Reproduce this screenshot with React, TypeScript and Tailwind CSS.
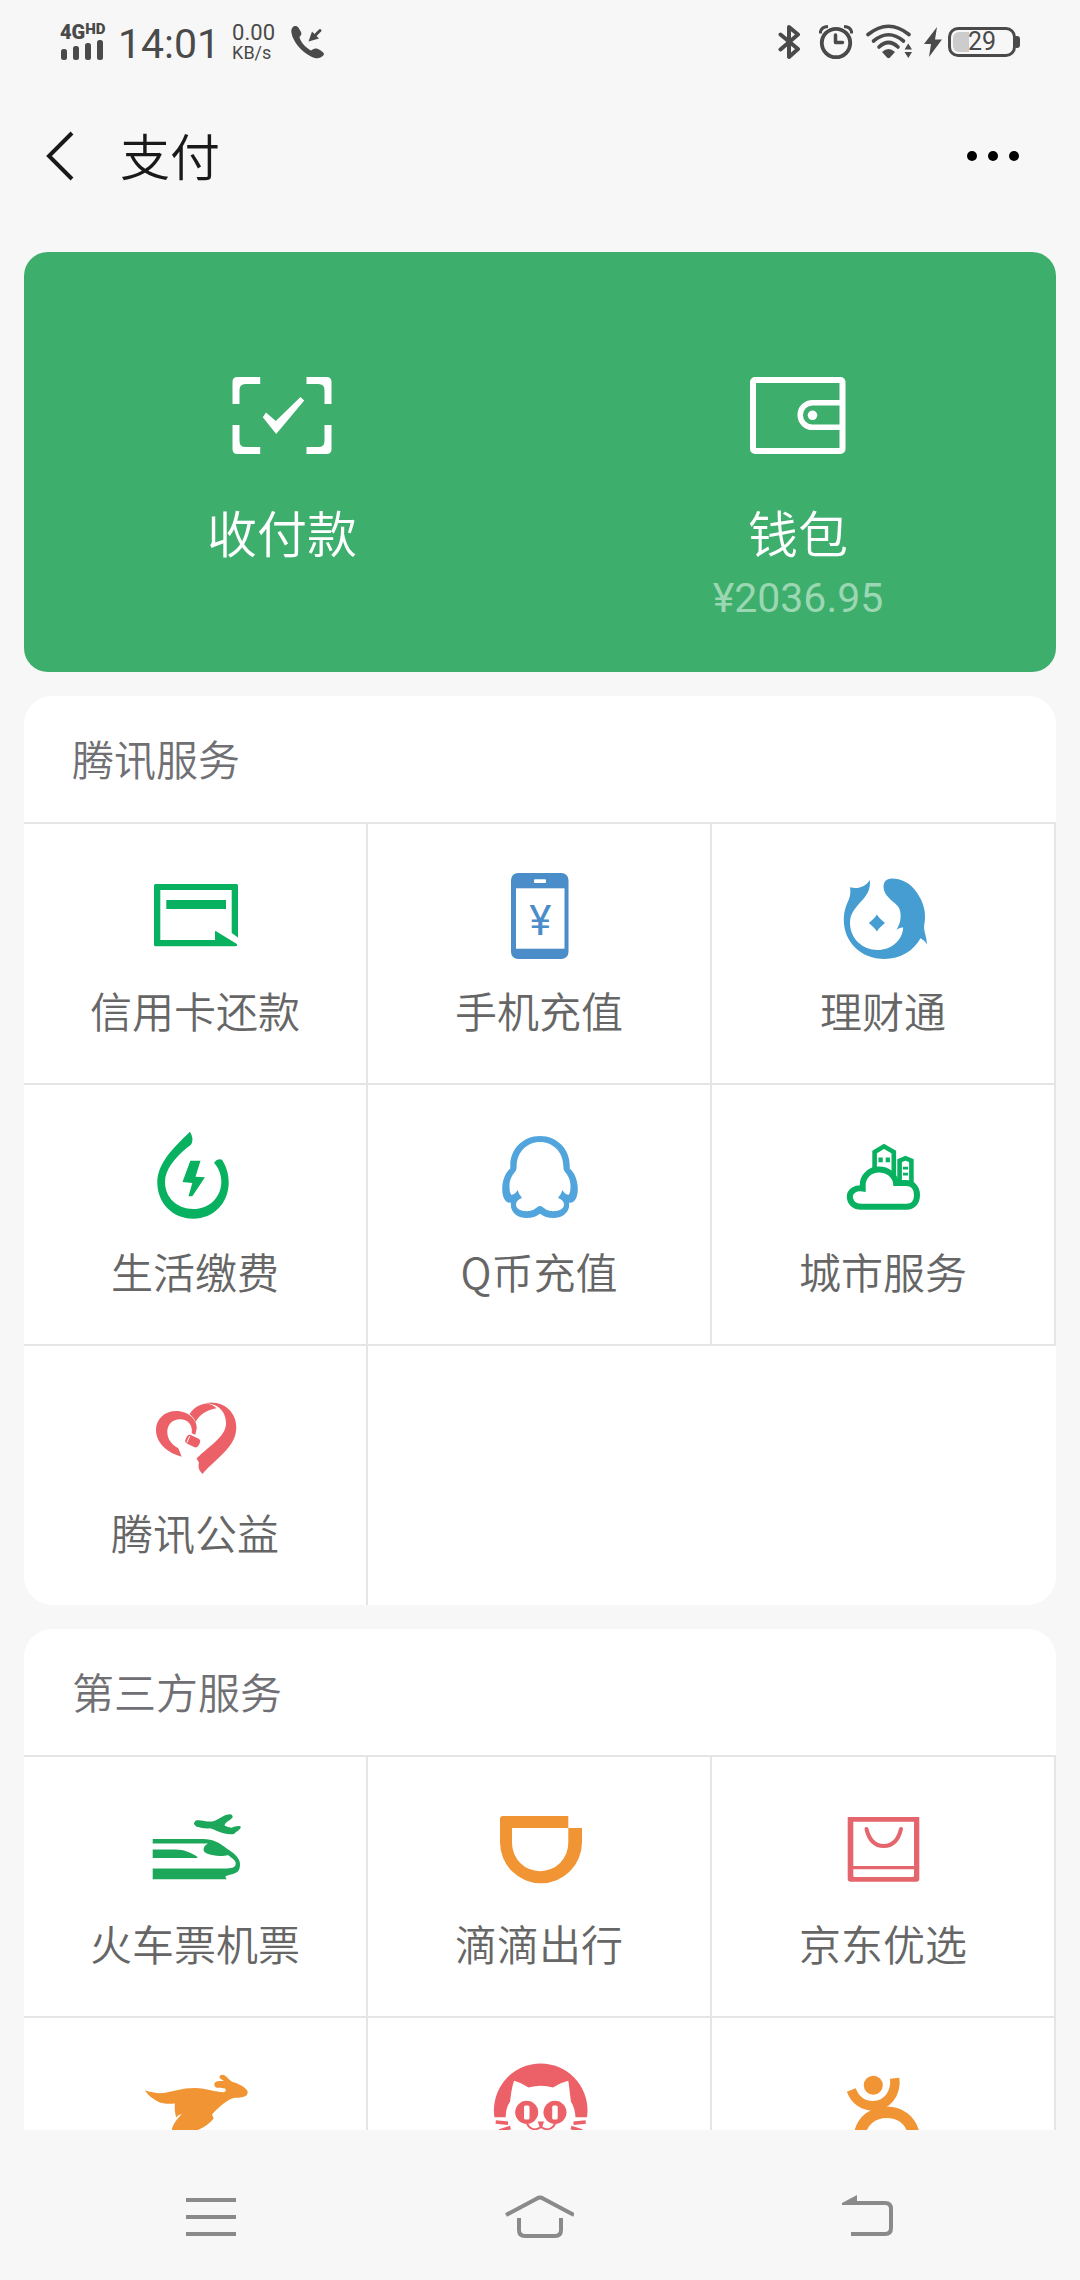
import type { ReactNode } from 'react';

interface Service {
  label?: string;
  icon: ReactNode;
}

const GREEN = '#07b15f';
const BLUE = '#469dd2';
const RED = '#ec6167';
const ORANGE = '#f19433';

function TileIcon({ children }: { children: ReactNode }) {
  return (
    <svg viewBox="0 0 96 96" className="h-24 w-24 overflow-visible" aria-hidden="true">
      {children}
    </svg>
  );
}

/* ---------- Tencent services ---------- */

const CreditCardIcon = (
  <TileIcon>
    <path
      fill={GREEN}
      d="M8.5 16H89.5Q91 16 91 17.5V69.5L84.7 65V22H13.3V72H68V64Q68 62.5 69.5 63.4L89.5 75.8Q91 78.3 88.5 78.3H8.5Q7 78.3 7 76.8V17.5Q7 16 8.5 16Z"
    />
    <rect x="19.3" y="32" width="59.7" height="9" fill={GREEN} />
  </TileIcon>
);

const PhoneTopUpIcon = (
  <TileIcon>
    <rect x="20" y="5" width="57.5" height="86" rx="7" fill="#4a8dc9" />
    <rect x="25" y="20.3" width="48.5" height="60.4" fill="#fff" />
    <rect x="43" y="11.3" width="12" height="3.7" rx="1" fill="#fff" />
    <text x="49.3" y="67" textAnchor="middle" fill="#4a8dc9" className="font-[Roboto] text-[42px] font-normal">¥</text>
  </TileIcon>
);

const WealthIcon = (
  <TileIcon>
    <path
      fill={BLUE}
      d="M15 19.3C23 21.5 31 18.5 34.7 12C36 19 33 26 27.5 32C19.5 40.5 15 46 15 55C15 70 27 82 42.8 82C55.5 82 67.5 73 68.2 59.5C65.5 59.3 63.5 60.3 61.5 62C63.5 58 65.3 55 65.5 50.3C66 45 65 41 62.9 38.2C58 33 49.5 28.5 48.6 20C48.2 14 51 10.5 57 10.5C66 10.5 74 14.5 79.5 21.5C86.5 30 90.5 40 90 50C89.8 55 88.7 58 89.2 61C89.7 66 91.9 70 91.9 76.5C90.5 74 88 71.5 85.5 70.3C78.5 83 65.5 91 49.5 91C26 91 8.8 74 8.8 52C8.8 42.5 11.5 37 14 31C15.5 27 15.7 23 15 19.3Z"
    />
    <path fill={BLUE} d="M41.9 46.5C44 50 46.800 52.300 50 55C46.800 57.700 44 60 41.900 63.500C39.800 60 37 57.700 33.800 55C37 52.300 39.800 50 41.900 46.500Z" />
  </TileIcon>
);

const UtilitiesIcon = (
  <TileIcon>
    <path
      fill={GREEN}
      d="M43 2.7Q46.5 9 45 13.5C44.5 16 42 17 40 18.7C27 29.5 18 41 18 53C18 68.5 30 80 46.3 80C62.5 80 74.3 68 74.3 52.7C74.3 45 71.5 39 67 33.7L69.7 31Q73.5 29.3 75.2 31C79.5 38 81.7 45 81.7 53.5C81.7 74 66.5 89.7 46.3 89.7C25.5 89.7 10.3 74 10.3 53.5C10.3 34 27 18 43 2.7Z"
    />
    <path fill={GREEN} d="M43.3 31.700H53.500L48.500 47.700L58 48.300L45.300 67.300H41.500L45.300 54L35.500 53Z" />
  </TileIcon>
);

const QCoinIcon = (
  <TileIcon>
    <path
      fill="#52a5dc"
      fillRule="evenodd"
      d="M49 7C66 7 78.7 20 78.7 36V39.5C84 44 86.8 52 86.8 60C86.8 68 84 73.7 79 73.7H78C79.5 83.5 71 89 62.3 89C57 89 52.5 87.5 49 84.7C45.5 87.5 41 89 35.7 89C27 89 18.5 83.5 20 73.7H19C14 73.7 11.2 68 11.2 60C11.2 52 14 44 19.3 39.5V36C19.3 20 32 7 49 7ZM49 13C36 13 26 23 25.7 36.5C25.7 39 25.3 41 24.3 42.5C20.5 47 18.5 51 18.5 57C18.5 61.5 19 64.5 20.5 66C23.5 65.5 25.3 63.5 26.5 61Q28 66 31 68.7C27 70.5 25 72.5 25 75.5C25 80 30 82.2 35.7 82.2C41.5 82.2 44 80 47 77.5Q49 76.3 51 77.5C54 80 56.5 82.2 62.3 82.2C68 82.2 73 80 73 75.5C73 72.5 71 70.5 67 68.7Q70 66 71.5 61C72.7 63.5 74.5 65.5 77.5 66C79 64.5 79.5 61.5 79.5 57C79.5 51 77.5 47 73.7 42.5C72.7 41 72.3 39 72.3 36.5C72 23 62 13 49 13Z"
    />
  </TileIcon>
);

const CityIcon = (
  <TileIcon>
    <g fill="none" stroke={GREEN}>
      <path strokeWidth="6" d="M27.7 59.5C20 58.5 14.8 62.5 14.8 67.8C14.8 73.5 19.5 77.7 26 77.7H71.5C77.5 77.7 82 73.5 82 66C82 58.5 77.5 54 71 54H61C60 46 52.5 40.5 44 40.5C34.5 40.5 27.7 47.5 27.7 56Z" />
      <path strokeWidth="4.6" d="M39.600 42V23L49 17.300L58.800 23V50M64.600 54V31.700L70.500 29.200L76.400 31.700V54" />
    </g>
    <path fill={GREEN} d="M43.500 28.500h4.200v4.700h-4.200zM50.700 28.500h4.200v4.700h-4.200zM68 37.700h5v2.700h-5zM68 43.700h5v2.700h-5z" />
  </TileIcon>
);

const CharityIcon = (
  <TileIcon>
    <path
      fill={RED}
      d="M34.7 66.7C19 62.5 9 52 9 40C9 29 17.5 21 29.5 21C41 21 50.5 30 49.7 38.5L48.3 44.7L44.7 43.3C46 35 41 29.5 33 29.3C25.5 29.3 20.3 34.5 20.3 42C20.3 49 24.5 54.5 31.3 58.3Z"
    />
    <path fill={RED} d="M42.5 24C49 15 56 13.3 62 14C65 15 68 16.5 69.5 18.3C60 20 53 24 48.5 32C47.5 29 45.5 26.5 42.5 24Z" />
    <path
      fill={RED}
      d="M58 13.2C76 9.5 89.3 22 89.3 37C89.3 50 82 58 72 67.5C65 74 59 79.5 55.5 84C52.5 81 51.3 78.5 51.5 75L52 72.5L49.5 68.5C56 62 61 58.5 67 53C74.5 46 79 41 79 33.3C79 25 75 18.5 68 15.3C65 14 61.5 13.2 58 13.2Z"
    />
    <rect x="38.5" y="46.3" width="14.5" height="9.5" rx="3.5" fill={RED} transform="rotate(25 45.5 51)" />
    <path fill="none" stroke="#fff" strokeWidth="1" d="M42.7 46.2L39.8 52.8" />
  </TileIcon>
);

/* ---------- Third-party services ---------- */

const TravelIcon = (
  <TileIcon>
    <path
      fill="#1da75a"
      fillRule="evenodd"
      d="M5.7 38H56C66 38 73 42 79.7 47.5C87 52 93 57 93 63C93 68.5 91.5 71.5 86 73Q79 74.5 78.3 75.7L79.7 78.3H5.7V67.5H78C84 67.5 88.5 67 88.7 62.8C89 59.5 85.5 57.5 81 54C79 54.7 76 55 73 55C64 54.5 56.5 52.5 56.5 48.5C56.5 45.5 59 43.5 61 42.5H5.7Z"
    />
    <path fill="#1da75a" d="M5.7 48.5H28C38 48.5 44 52 50.3 55.7V57H5.7Z" />
    <path
      fill="#1da75a"
      d="M49.7 19.3C55 18.5 60 21.5 66.3 20.3C72 18.5 76 14 81.5 13.5Q85.5 12.5 85.7 16.3C83 20 78.500 20.500 77.500 24.500Q81 26.500 84.700 26.700C87.500 25.500 91 24.500 93.700 25.500C94 29 89.500 30 87 33C83 33.500 80 33 76.300 32.300C71 31 67.500 28.500 63 27.300C58 28 54 26.500 49.700 25.700Q46 23.500 47.300 21.500Q48 19.700 49.700 19.300Z"
    />
  </TileIcon>
);

const DidiIcon = (
  <TileIcon>
    <path
      fill={ORANGE}
      fillRule="evenodd"
      d="M12 15H77.3V27H91V41.3A41 41 0 0 1 9 41.3V18Q9 15 12 15ZM21 27V42A28.15 28.15 0 0 0 77.3 42V27Z"
    />
  </TileIcon>
);

const ShoppingIcon = (
  <TileIcon>
    <path
      fill="#e4666c"
      fillRule="evenodd"
      d="M12.7 16H84.3V77.7Q84.3 80.7 81.3 80.7H15.7Q12.7 80.7 12.7 77.7ZM18.3 20.7V65H79V20.7ZM18.3 68.3V74.5Q18.3 76 19.8 76H77.5Q79 76 79 74.5V68.3Z"
    />
    <path fill="none" stroke="#e4666c" strokeWidth="4" strokeLinecap="round" d="M31.5 28C34 38.5 40 45 48.7 45C57.5 45 63.5 38.5 66 28" />
  </TileIcon>
);

const KangarooIcon = (
  <TileIcon>
    <path
      fill={ORANGE}
      d="M-2 28.3C4 30.5 10 31.5 17 31C27 29.5 34 26 48 26C60 26.3 68 30 77 30.3Q80 29 78 26.5C74 25.5 70 27 68 24.5Q66 21.5 69 19.7C71.5 18.5 74.5 19.3 77 19C74.5 17.5 72 16.5 72.5 14.5Q73.5 12.3 76 12.7C80 14 82 18 85.5 20C91 21.5 97 24 100.3 28.5Q101.5 32.5 98.5 34C94 36.5 88 35 83.5 37C77.5 40.5 70 46.5 65 52.5L66.7 56.5C63 61 58 65 52 67.5C46 70 38 68 24.7 72C24 64 29 58.5 34.7 52C32.5 52.5 30.5 53.5 29.2 55.5C28 51 27.3 46 28 41.5C22 42 16 42 11.3 39.7C5 36.5 0 32.5 -2 28.3Z"
    />
  </TileIcon>
);

const CatIcon = (
  <TileIcon>
    <circle cx="49.7" cy="48.3" r="46.8" fill={RED} />
    <path
      fill="#fff"
      d="M23 18.7C28 20 33 22.5 37.5 25.5Q50 22 62 25.5C66.5 22.5 72 20 77.3 18.7C78.5 26 79 33 80 39.7Q84 46 84.5 55.3H100V100H0V55.3H14.7Q14.5 46 19 39.7C20 33 20.5 26 23 18.7Z"
    />
    <g fill="none" stroke={RED}>
      <path strokeWidth="3.5" d="M4.7 60L17 61.2M8.5 69L19.5 65.5M94.7 60L82.5 61.2M91 69L80 65.500" />
      <path strokeWidth="1.8" d="M35.7 61C38 66 43 70 50 65C57 70 62 66 64.5 61" />
    </g>
    <circle cx="35.7" cy="50.3" r="11.5" fill={RED} />
    <circle cx="64" cy="50.3" r="11.5" fill={RED} />
    <rect x="33" y="43.5" width="5.5" height="14" rx="1.5" fill="#fff" />
    <rect x="61.2" y="43.5" width="5.5" height="14" rx="1.5" fill="#fff" />
    <path fill={RED} d="M46.7 59.5H53L51 65.5H49Z" />
  </TileIcon>
);

const ReviewIcon = (
  <TileIcon>
    <circle cx="38.3" cy="23.3" r="9.5" fill={ORANGE} />
    <g fill="none" stroke={ORANGE}>
      <path strokeWidth="9.5" d="M16.3 28C20 38 28 43.8 38 43.8C52 43.8 61.5 31.5 59.7 16.3" />
      <path strokeWidth="11.5" d="M24.5 72C27.5 58.5 38 50.3 51.7 50.3C65.5 50.3 75.5 58.5 79 72" />
    </g>
  </TileIcon>
);

const tencentServices: Service[][] = [
  [
    { label: '信用卡还款', icon: CreditCardIcon },
    { label: '手机充值', icon: PhoneTopUpIcon },
    { label: '理财通', icon: WealthIcon },
  ],
  [
    { label: '生活缴费', icon: UtilitiesIcon },
    { label: 'Q币充值', icon: QCoinIcon },
    { label: '城市服务', icon: CityIcon },
  ],
  [{ label: '腾讯公益', icon: CharityIcon }],
];

const thirdPartyServices: Service[][] = [
  [
    { label: '火车票机票', icon: TravelIcon },
    { label: '滴滴出行', icon: DidiIcon },
    { label: '京东优选', icon: ShoppingIcon },
  ],
  [{ icon: KangarooIcon }, { icon: CatIcon }, { icon: ReviewIcon }],
];

function ServiceCard({ title, rows }: { title: string; rows: Service[][] }) {
  return (
    <section className="shrink-0 overflow-hidden rounded-[28px] bg-white">
      <h2 className="flex h-[126px] items-center px-12 pb-1 text-[42px] text-[#707074]">{title}</h2>
      {rows.map((row, i) => (
        <div key={i} className="grid h-[261px] grid-cols-3 border-t-2 border-[#e5e5e5]">
          {row.map((service, j) => (
            <button key={j} className="flex flex-col items-center border-r-2 border-[#e5e5e5] pt-11">
              {service.icon}
              {service.label && (
                <span className="mt-4 text-[42px] leading-[60px] text-[#666]">{service.label}</span>
              )}
            </button>
          ))}
        </div>
      ))}
    </section>
  );
}

function StatusBar() {
  return (
    <div className="flex h-[84px] shrink-0 items-center justify-between px-[60px] font-[Roboto,sans-serif] font-normal text-[#4a4a4a]">
      <div className="flex items-center">
        <div className="w-[46px]">
          <div className="flex h-4 items-start leading-4 font-black">
            <span className="text-[20px]">4G</span>
            <span className="text-[15px] leading-[10px]">HD</span>
          </div>
          <svg viewBox="0 0 46 20" className="h-5 w-[46px]" fill="currentColor" aria-hidden="true">
            <rect x="1" y="9" width="6" height="11" rx="2.5" />
            <rect x="13" y="6" width="6" height="14" rx="2.5" />
            <rect x="25" y="3" width="6" height="17" rx="2.5" />
            <rect x="37" y="0" width="6" height="20" rx="2.5" />
          </svg>
        </div>
        <span className="ml-3 pt-1 text-[41px] leading-[48px]">14:01</span>
        <div className="ml-3 flex flex-col pt-[2px]">
          <span className="text-[22px] leading-5">0.00</span>
          <span className="text-[18px] leading-5">KB/s</span>
        </div>
        <svg viewBox="0 0 34 34" className="ml-4 h-[34px] w-[34px]" aria-hidden="true">
          <path
            fill="currentColor"
            d="M1.5 2.5C3.5 .3 6 .8 7.5 2.8L10 7C11 9 10 10.5 8.5 12C9.5 17 14.5 22.5 20 25.5C21.5 24.5 23 23 25.5 23.5C28.5 24.5 30.5 26 32.5 27.7C33.8 29.5 32 31 30 32.3C27 34 23.5 33.5 20 31.5C11 27 2 17 .5 8C0 5.5 .3 4 1.5 2.5Z"
          />
          <path fill="none" stroke="currentColor" strokeWidth="3" strokeLinecap="round" d="M29 5.5L22.5 12" />
          <path fill="currentColor" d="M21 6.5L28 13.5L17.5 16.5Z" />
        </svg>
      </div>
      <div className="flex items-center">
        <svg viewBox="0 0 23 36" className="h-9 w-[23px]" fill="none" stroke="currentColor" strokeWidth="4" strokeLinejoin="round" strokeLinecap="round" aria-hidden="true">
          <path d="M2.5 10.5L20 25L11 33V3L20 10.5L2.5 25.5" />
        </svg>
        <svg viewBox="0 0 34 36" className="ml-[18px] h-9 w-[34px]" fill="none" stroke="currentColor" aria-hidden="true">
          <circle cx="17" cy="19" r="14.2" strokeWidth="3.8" />
          <path strokeWidth="3.5" strokeLinecap="round" strokeLinejoin="round" d="M16.5 11V18.5H23.5" />
          <path strokeWidth="3" d="M1.3 9.5Q1.3 3 9 2.5M32.7 9.5Q32.7 3 25 2.5" />
        </svg>
        <svg viewBox="0 0 46 36" className="ml-[13px] h-9 w-[46px]" aria-hidden="true">
          <g fill="none" stroke="currentColor" strokeWidth="3.6" strokeLinecap="round">
            <path d="M2 10.5Q22.5 -6 43 10.5" />
            <path d="M7.5 17Q22.5 4.5 37.5 17" />
            <path d="M13 23Q22.5 14 32 23" />
          </g>
          <path fill="currentColor" d="M16 28Q22.5 22 29 28L24 33.5Q22.5 35 21 33.5ZM38.5 25.5L42.3 19.5L46 25.5ZM38.5 28L42.3 34L46 28Z" />
        </svg>
        <svg viewBox="0 0 18 30" className="ml-3 h-[30px] w-[18px]" fill="currentColor" aria-hidden="true">
          <path d="M13 0L0 17H7L5 30L18 12.5H11Z" />
        </svg>
        <div className="ml-[6px] flex items-center">
          <div className="relative flex h-[30px] w-[68px] items-center justify-center rounded-[10px] border-[3px] border-current">
            <span className="absolute top-[2px] left-[2px] h-5 w-4 rounded-l-[6px] bg-[#ccc]" />
            <span className="relative text-[25px] leading-6">29</span>
          </div>
          <span className="h-3 w-1 rounded-r-[3px] bg-current" />
        </div>
      </div>
    </div>
  );
}

export default function App() {
  return (
    <div className="flex h-screen flex-col bg-[#f7f7f7] font-['Noto_Sans_CJK_SC',sans-serif] font-[350]">
      <StatusBar />

      <header className="flex h-36 shrink-0 items-center justify-between pr-[60px] pl-[46px] text-[#191919]">
        <div className="flex items-center gap-[46px]">
          <button aria-label="返回">
            <svg viewBox="0 0 28 50" className="h-[50px] w-7" fill="none" stroke="currentColor" strokeWidth="4" aria-hidden="true">
              <path d="M26 2L3 25L26 48" />
            </svg>
          </button>
          <h1 className="pb-1 text-[50px] leading-[72px]">支付</h1>
        </div>
        <button aria-label="更多">
          <svg viewBox="0 0 54 12" className="h-3 w-[54px]" fill="#000" aria-hidden="true">
            <circle cx="6" cy="6" r="5" />
            <circle cx="27" cy="6" r="5" />
            <circle cx="48" cy="6" r="5" />
          </svg>
        </button>
      </header>

      <main className="flex flex-1 flex-col gap-6 overflow-y-auto px-6 pt-6 [scrollbar-width:none]">
        <section className="grid h-[420px] shrink-0 grid-cols-2 rounded-[24px] bg-[#3eae6c] text-white">
          <button className="flex flex-col items-center pt-[125px]">
            <svg viewBox="0 0 99 78" className="h-[78px] w-[100px]" fill="currentColor" aria-hidden="true">
              <path d="M0 27V5Q0 0 5 0H27.7V7H13Q7 7 7 13V27ZM99 27V5Q99 0 94 0H74V7H86Q92 7 92 13V27ZM0 48V72Q0 77 5 77H27.7V70H13Q7 70 7 64V48ZM99 48V72Q99 77 94 77H74V70H86Q92 70 92 64V48Z" />
              <path d="M30.3 40.3L33.5 35.5L43.3 44L68 20L71.7 23.5L43.7 57Z" />
            </svg>
            <span className="mt-[40px] text-[50px] leading-[72px]">收付款</span>
          </button>
          <button className="flex flex-col items-center pt-[125px]">
            <svg viewBox="0 0 99 78" className="h-[78px] w-[100px]" fill="none" stroke="currentColor" aria-hidden="true">
              <rect x="4.5" y="3" width="89.5" height="71" rx="2" strokeWidth="6" />
              <path strokeWidth="5.5" d="M94 25.7H64A12.3 12.3 0 0 0 64 50.3H94" />
              <circle cx="64" cy="38.3" r="4.8" fill="currentColor" stroke="none" />
            </svg>
            <span className="mt-[40px] text-[50px] leading-[72px]">钱包</span>
            <span className="font-[Roboto,sans-serif] text-[41px] leading-[62px] font-normal text-[#9bd7b2]">¥2036.95</span>
          </button>
        </section>

        <ServiceCard title="腾讯服务" rows={tencentServices} />
        <ServiceCard title="第三方服务" rows={thirdPartyServices} />
      </main>

      <footer className="flex h-[150px] shrink-0 items-center justify-between px-[186px] pt-6 text-[#8a8a8a]">
        <button aria-label="最近任务">
          <svg viewBox="0 0 50 44" className="h-11 w-[50px]" fill="none" stroke="currentColor" strokeWidth="4" aria-hidden="true">
            <path d="M0 5H50M0 22H50M0 39H50" />
          </svg>
        </button>
        <button aria-label="主屏幕">
          <svg viewBox="0 0 70 44" className="h-11 w-[70px]" fill="none" stroke="currentColor" strokeWidth="4" aria-hidden="true">
            <path d="M2 20L33 3.5Q36 1.5 39 3.5L70 20M15 23V35Q15 41 21 41H51Q57 41 57 35V23" />
          </svg>
        </button>
        <button aria-label="后退">
          <svg viewBox="0 0 52 44" className="h-11 w-[52px]" fill="none" stroke="currentColor" strokeWidth="4" aria-hidden="true">
            <path d="M4 8H43Q49 8 49 14V33Q49 39 43 39H9" />
            <path d="M0 10V8L15 0V10Z" fill="currentColor" stroke="none" />
          </svg>
        </button>
      </footer>
    </div>
  );
}
